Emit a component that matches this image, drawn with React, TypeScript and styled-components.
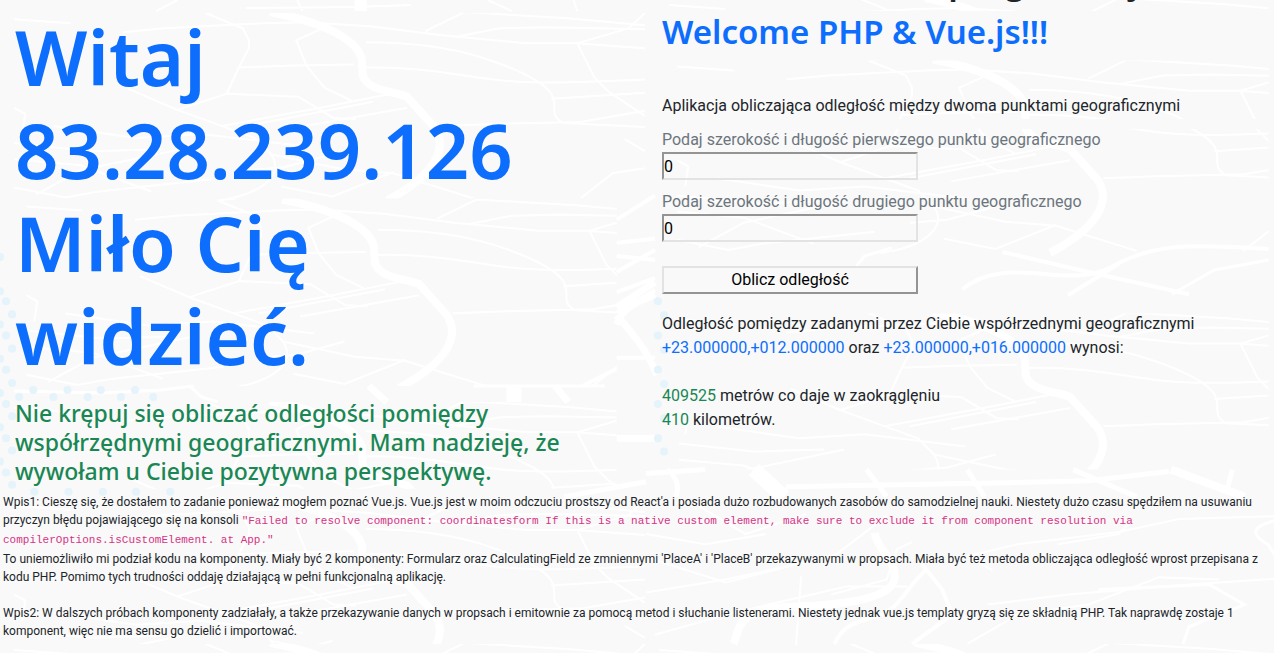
import React, { useState } from "react";
import styled, { createGlobalStyle } from "styled-components";

const GlobalStyle = createGlobalStyle`
  *, *::before, *::after { box-sizing: border-box; }
  body {
    margin: 0;
    background: #f9f9f9;
    color: #212529;
    font-family: Roboto, "Noto Sans", sans-serif;
    font-size: 16px;
    line-height: 24px;
  }
`;

const Page = styled.div`
  position: relative;
  min-height: 100vh;
  overflow: hidden;
`;

const MapBackdrop = styled.svg`
  position: absolute;
  inset: 0;
  width: 100%;
  height: 100%;
  z-index: -1;
  fill: none;
  stroke: #fff;
  stroke-width: 2;
`;

const Columns = styled.main`
  display: grid;
  grid-template-columns: 1fr 1fr;
`;

const Greeting = styled.section`
  padding: 10px 15px 0;
`;

const Title = styled.h1`
  margin: 0 0 17px;
  color: #0d6efd;
  font: 600 76px/93px "Noto Sans", sans-serif;
`;

const Invitation = styled.h2`
  margin: 0;
  color: #198754;
  font: 500 23px/29px "Noto Sans", sans-serif;
  white-space: nowrap;
`;

const Calculator = styled.section`
  padding-left: 25px;
`;

const ClippedTitle = styled.div`
  display: flex;
  align-items: flex-end;
  height: 4px;
  overflow: hidden;
  font: 600 34px/46px "Noto Sans", sans-serif;
  white-space: nowrap;
`;

const Welcome = styled.h2`
  margin: 7px 0 41px;
  color: #0d6efd;
  font: 600 33px/42px "Noto Sans", sans-serif;
`;

const Form = styled.form`
  display: flex;
  flex-direction: column;
  align-items: flex-start;
  gap: 10px;
`;

const Field = styled.label`
  display: flex;
  flex-direction: column;
  color: #6c757d;
`;

const Input = styled.input`
  width: 256px;
  height: 28px;
  padding: 0;
  border: 2px solid;
  border-color: #949494 #e3e3e3 #e3e3e3 #949494;
  background: transparent;
  color: #000;
  font: inherit;
`;

const Submit = styled.button`
  width: 256px;
  height: 28px;
  margin-top: 14px;
  padding: 0;
  border: 2px solid;
  border-color: #e3e3e3 #949494 #949494 #e3e3e3;
  background: transparent;
  color: #000;
  font: inherit;
`;

const Result = styled.div`
  margin-top: 18px;
`;

const Paragraph = styled.p`
  margin: 0 0 24px;
`;

const Value = styled.span<{ $tone: "primary" | "success" }>`
  color: ${(p) => (p.$tone === "primary" ? "#0d6efd" : "#198754")};
`;

const Notes = styled.footer`
  padding: 7px 3px 0;
  font-size: 12px;
  line-height: 18px;
`;

const Note = styled.p`
  margin: 0 0 18px;
`;

const Line = styled.span`
  display: block;
  white-space: nowrap;
`;

const Code = styled.code`
  color: #d63384;
  font-family: "Liberation Mono", monospace;
  font-size: 11px;
  line-height: 18px;
`;

const CodeLine = styled(Code)`
  display: block;
  line-height: 20px;
`;

const tiles = [
  { x: 0, y: 0, left: 14, top: 13, right: 641, bottom: 197 },
  { x: 12, y: 186, left: 26, top: 197, right: 612, bottom: 383 },
  { x: 0, y: 386, left: 14, top: 399, right: 612, bottom: 485 },
  { x: 0, y: 483, left: 14, top: 493, right: 641, bottom: 639 },
  { x: 650, y: -14, left: 650, top: 0, right: 1259, bottom: 11 },
  { x: 658, y: 47, left: 650, top: 60, right: 1259, bottom: 118 },
  { x: 658, y: 52, left: 662, top: 128, right: 1259, bottom: 294 },
  { x: 658, y: 298, left: 674, top: 311, right: 1259, bottom: 466 },
  { x: 0, y: 626, left: 0, top: 639, right: 641, bottom: 653 },
  { x: 640, y: 626, left: 641, top: 639, right: 1274, bottom: 653 },
];

const dots = [
  ...[255, 289, 322, 356, 390, 424, 458].map((y) => [0, y]),
  ...[299, 333, 367, 401, 435, 469].map((y) => [6, y]),
  ...[312, 346, 380, 413, 447, 481].map((y) => [12, y]),
  ...[299, 333, 367, 401, 435].map((y) => [653, y]),
  ...[313, 347, 381, 415, 448].map((y) => [659, y]),
  ...[33, 67, 100, 134].map((x) => [x, 387]),
  ...[19, 53, 87, 120, 152].map((x) => [x, 394]),
  ...[34, 68, 102, 135, 169].map((x) => [x, 488]),
];

function StreetMap() {
  return (
    <MapBackdrop viewBox="0 0 1274 653" preserveAspectRatio="xMinYMin slice" aria-hidden="true">
      <defs>
        <g id="streets">
          <path d="M14 19 70 23M122 32 163 28 261 23 304 22 367 26 439 35 522 43 571 43 640 48" />
          <path d="M204 13 241 28 247 40 247 48 237 67 225 93M237 67 290 65 351 64M204 13 222 11" />
          <path d="M327 25 294 40 304 65 322 87 349 100M363 42C408 42 449 48 478 57S539 80 547 93 543 113 559 122L640 126" />
          <path d="M363 67C408 66 441 72 482 78S571 82 640 79M455 36 496 28 543 27 640 29M422 31 461 12 563 18 640 25" />
          <path d="M640 13 624 28 573 43 590 77 604 91 640 115M547 98 640 92M388 93 318 107 220 125M404 107 286 128M370 101 245 125" />
          <path d="M127 88 176 109 225 93 296 96 331 117 353 118M176 109 253 137 269 153C282 173 261 193 216 199" />
          <path d="M14 107 25 113 22 133M53 125 135 137 200 133 300 145M437 125 490 123 576 121 640 110M640 167 608 172 576 197" />
          <path d="M14 142 90 150 160 148M14 158 80 164 150 190M14 186 65 196 98 190 210 178M36 193 80 169 180 148" />
          <path d="M269 153 340 168 390 172M279 185 330 195 390 171M245 169 282 166 330 153M390 172 470 197M620 138 640 150" />
          <path d="M268 12C306 19 352 34 359 58L360 75C366 91 390 90 404 96L431 126C445 147 433 173 384 199" strokeWidth="8" />
        </g>
        {tiles.map((t, i) => (
          <clipPath id={`tile-${i}`} key={i}>
            <rect x={t.left} y={t.top} width={t.right - t.left} height={t.bottom - t.top} />
          </clipPath>
        ))}
      </defs>

      {tiles.map((t, i) => (
        <g clipPath={`url(#tile-${i})`} key={i}>
          <use href="#streets" x={t.x} y={t.y} />
        </g>
      ))}

      <path d="M176 0 155 11M244 8 351 7 408 5M295 0 300 11M484 0 508 11M569 0 573 11" />
      <path d="M358 0V11" strokeWidth="12" />

      <path d="M14 388 100 390 160 387 192 383M188 383 200 394 216 399M470 383 600 383" strokeWidth="3" />
      <path d="M366 383 384 399M551 383 564 399" strokeWidth="7" />
      <path d="M510 383V399" strokeWidth="15" />

      <path d="M612 218 650 194M612 241 650 237M612 254 650 258M612 270 650 248M612 290 650 276M612 310 650 288M612 355H650M578 383 612 366" strokeWidth="4" />
      <path d="M612 305 650 280M612 322C620 302 634 300 650 292M612 313C626 329 640 344 652 372M612 435H650" strokeWidth="7" />
      <path d="M955 287C1000 250 1060 290 1105 264S1200 244 1259 247M995 250 1080 270 1180 292M1060 293 1110 262" strokeWidth="4" />
      <path d="M850 264 858 254 885 246M1163 292 1205 268 1259 258" strokeWidth="3" />

      <path d="M641 470 700 466M780 483 1000 479 1080 477 1160 468M860 466 880 493M960 466 977 493M1065 466 1128 493M1223 466 1218 485" strokeWidth="5" />
      <path d="M748 466 778 493" strokeWidth="15" />
      <path d="M1162 466 1235 493" strokeWidth="8" />
      <path d="M662 466C672 474 674 482 671 493M560 493 641 478" strokeWidth="5" />

      <path d="M641 553 720 578 830 550 880 512M650 630 720 610 840 582 900 582M790 640 795 572M905 538 890 545 880 575 825 590" />
      <path d="M641 530 700 540 760 530M641 588 720 575 790 560M690 500 740 530 800 510M985 566 960 552 1010 540 1110 528 1170 515 1270 512" />
      <path d="M960 639 1010 610 1080 600 1150 573 1210 575M1120 520 1110 530 1050 540M980 600 1060 590 1180 580 1272 574" />
      <path d="M868 529C870 545 888 553 888 572S850 600 790 602 735 622 728 639" strokeWidth="8" />
      <path d="M920 565C900 580 895 605 868 612S835 625 828 639M915 560 935 585 945 610 905 639" strokeWidth="4" />
      <path d="M1272 515C1240 522 1240 530 1259 541L1272 562M1090 585 1200 580 1235 600 1180 622 1174 639" strokeWidth="3" />

      <g fill="#e5f3fb" stroke="none">
        {dots.map(([x, y]) => (
          <circle cx={x} cy={y} r="4" key={`${x}-${y}`} />
        ))}
      </g>
    </MapBackdrop>
  );
}

export default function App() {
  const [first, setFirst] = useState("0");
  const [second, setSecond] = useState("0");

  return (
    <Page>
      <GlobalStyle />
      <StreetMap />
      <Columns>
        <Greeting>
          <Title>
            Witaj
            <br />
            83.28.239.126
            <br />
            Miło Cię
            <br />
            widzieć.
          </Title>
          <Invitation>
            Nie krępuj się obliczać odległości pomiędzy
            <br />
            współrzędnymi geograficznymi. Mam nadzieję, że
            <br />
            wywołam u Ciebie pozytywna perspektywę.
          </Invitation>
        </Greeting>

        <Calculator>
          <ClippedTitle>Zadanie z nauki i programacji</ClippedTitle>
          <Welcome>Welcome PHP &amp; Vue.js!!!</Welcome>
          <Form onSubmit={(e) => e.preventDefault()}>
            <div>Aplikacja obliczająca odległość między dwoma punktami geograficznymi</div>
            <Field>
              Podaj szerokość i długość pierwszego punktu geograficznego
              <Input value={first} onChange={(e) => setFirst(e.target.value)} />
            </Field>
            <Field>
              Podaj szerokość i długość drugiego punktu geograficznego
              <Input value={second} onChange={(e) => setSecond(e.target.value)} />
            </Field>
            <Submit type="submit">Oblicz odległość</Submit>
          </Form>
          <Result>
            <Paragraph>
              Odległość pomiędzy zadanymi przez Ciebie współrzednymi geograficznymi
              <br />
              <Value $tone="primary">+23.000000,+012.000000</Value> oraz{" "}
              <Value $tone="primary">+23.000000,+016.000000</Value> wynosi:
            </Paragraph>
            <Paragraph>
              <Value $tone="success">409525</Value> metrów co daje w zaokrąglęniu
              <br />
              <Value $tone="success">410</Value> kilometrów.
            </Paragraph>
          </Result>
        </Calculator>
      </Columns>

      <Notes>
        <Note>
          <Line>
            Wpis1: Cieszę się, że dostałem to zadanie ponieważ mogłem poznać Vue.js. Vue.js jest w moim odczuciu
            prostszy od React'a i posiada dużo rozbudowanych zasobów do samodzielnej nauki. Niestety dużo czasu
            spędziłem na usuwaniu
          </Line>
          <Line>
            przyczyn błędu pojawiającego się na konsoli{" "}
            <Code>
              "Failed to resolve component: coordinatesform If this is a native custom element, make sure to exclude it
              from component resolution via
            </Code>
          </Line>
          <CodeLine>compilerOptions.isCustomElement. at App."</CodeLine>
          <Line>
            To uniemożliwiło mi podział kodu na komponenty. Miały być 2 komponenty: Formularz oraz CalculatingField ze
            zmniennymi 'PlaceA' i 'PlaceB' przekazywanymi w propsach. Miała być też metoda obliczająca odległość wprost
            przepisana z
          </Line>
          <Line>kodu PHP. Pomimo tych trudności oddaję działającą w pełni funkcjonalną aplikację.</Line>
        </Note>
        <Note>
          <Line>
            Wpis2: W dalszych próbach komponenty zadziałały, a także przekazywanie danych w propsach i emitownie za
            pomocą metod i słuchanie listenerami. Niestety jednak vue.js templaty gryzą się ze składnią PHP. Tak naprawdę
            zostaje 1
          </Line>
          <Line>komponent, więc nie ma sensu go dzielić i importować.</Line>
        </Note>
      </Notes>
    </Page>
  );
}
